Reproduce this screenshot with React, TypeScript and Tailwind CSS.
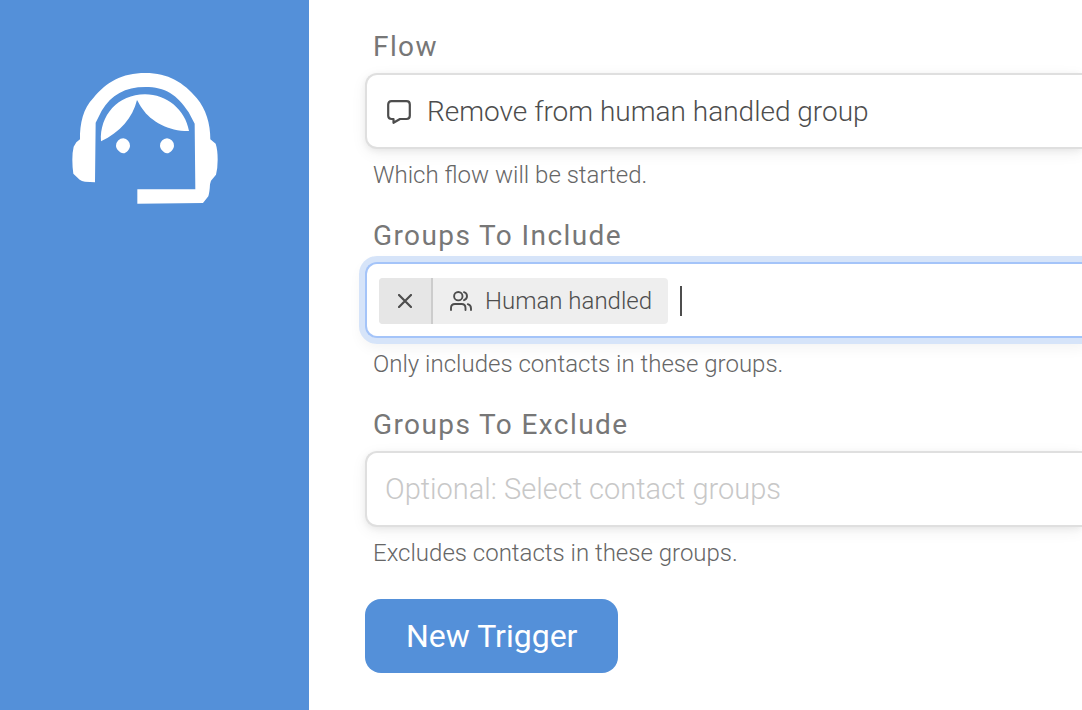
import React, { useState } from 'react';

interface FieldProps {
  id: string;
  label: string;
  hint: string;
  focused?: boolean;
  children: React.ReactNode;
}

// Headset logo shown at the top of the sidebar
const AgentIcon: React.FC = () => (
  <svg viewBox="36 38 438 393" className="w-[146px] h-[131px]" fill="white" aria-hidden="true">
    <path d="M105 366 L75 364 Q65 363 59 358 L40 340 Q37 320 37 298 Q37 275 41 259 L49 246 L60 237 C59 190 70 143 100 113 C140 65 185 38 256 38 C325 38 371 67 410 113 C438 146 451 190 451 237 L467 250 Q473 268 473 298 Q473 324 468 343 L453 361 L450 372 Q449 395 445 408 L429 428 L232 430 V387 H406 L404 190 L386 156 C352 103 315 80 256 80 C195 80 154 104 125 151 L107 187 Z" />
    <path d="M231 119 C236 127 240 136 247 145 C273 184 329 213 387 212 C376 148 320 102 255 102 C174 102 118 166 123 243 C180 216 218 173 231 119 Z" />
    <path d="M190 234 A22 22 0 0 1 210 256 C210 266 200 278 190 279 C179 277 168 266 168 256 A22 22 0 0 1 190 234 Z" />
    <path d="M321 234 A22 22 0 0 1 342 256 C342 266 331 278 321 279 C311 277 300 266 300 256 A22 22 0 0 1 321 234 Z" />
  </svg>
);

const MessageIcon: React.FC = () => (
  <svg viewBox="0 0 24 24" className="w-6 h-6 shrink-0" fill="none" stroke="currentColor" strokeWidth="2.2" strokeLinejoin="round" aria-hidden="true">
    <path d="M4.5 1.2 H19.5 Q22.8 1.2 22.8 4.5 V15.8 Q22.8 19 19.5 19 H13 L6.5 22.8 V19 H4.5 Q1.2 19 1.2 15.8 V4.5 Q1.2 1.2 4.5 1.2 Z" />
  </svg>
);

const GroupIcon: React.FC = () => (
  <svg viewBox="0 0 22 20" className="w-[22px] h-5 shrink-0" fill="none" stroke="currentColor" strokeWidth="1.9" strokeLinecap="round" aria-hidden="true">
    <circle cx="8.3" cy="5.2" r="4.2" />
    <path d="M14 1.2 Q17 2 17 5.2 Q17 8 14 9.2" />
    <path d="M1 19 V17 Q1 13 5 13 H11.5 Q15.5 13 15.5 17 V19" />
    <path d="M17.8 13.2 Q21 14 21 17.5 V19" />
  </svg>
);

const CloseIcon: React.FC = () => (
  <svg viewBox="0 0 14 14" className="w-[14px] h-[14px]" fill="none" stroke="currentColor" strokeWidth="2.2" strokeLinecap="round" aria-hidden="true">
    <path d="M1 1 L13 13 M13 1 L1 13" />
  </svg>
);

const Field: React.FC<FieldProps> = ({ id, label, hint, focused, children }) => {
  const box = focused
    ? 'border-[#a4c4f9] shadow-[0_0_0_6px_#d6e4f9,0_6px_14px_4px_rgba(0,0,0,0.05)]'
    : 'border-[#dfdfdf] shadow-[0_2px_6px_rgba(0,0,0,0.06),0_4px_16px_rgba(0,0,0,0.06)]';

  return (
    <div className="mb-[25px]">
      <label htmlFor={id} className="block mb-2 pl-2 text-[28px] leading-9 tracking-wider text-[#777]">
        {label}
      </label>
      <div className={`flex items-center h-19 rounded-l-xl border-2 border-r-0 bg-white ${box}`}>
        {children}
      </div>
      <p className="mt-2 pl-2 text-2xl leading-9 font-light text-[#666]">{hint}</p>
    </div>
  );
};

const App: React.FC = () => {
  const [groups, setGroups] = useState<string[]>(['Human handled']);

  const removeGroup = (name: string) => {
    setGroups((prev) => prev.filter((group) => group !== name));
  };

  return (
    <div className="flex min-h-screen overflow-hidden bg-white font-['Roboto',sans-serif] antialiased">
      <aside className="w-[309px] shrink-0 bg-[#5490d9] pt-[73px] pl-[72px]">
        <AgentIcon />
      </aside>

      <main className="flex-1 min-w-0 pt-[29px] pl-14">
        <form onSubmit={(e) => e.preventDefault()}>
          <Field id="flow" label="Flow" hint="Which flow will be started.">
            <div className="flex flex-1 items-center gap-4 pt-0.5 pl-5 text-[#4d4d4d]">
              <MessageIcon />
              <select id="flow" className="flex-1 min-w-0 appearance-none bg-transparent text-[28px] leading-9 font-light outline-none">
                <option>Remove from human handled group</option>
              </select>
            </div>
          </Field>

          <Field id="include" label="Groups To Include" hint="Only includes contacts in these groups." focused>
            <div className="flex flex-1 items-center gap-3 pt-0.5 pl-3 text-[#4d4d4d]">
              {groups.map((group) => (
                <div key={group} className="flex h-[46px] shrink-0 overflow-hidden rounded bg-[#eee]">
                  <button
                    type="button"
                    onClick={() => removeGroup(group)}
                    aria-label={`Remove ${group}`}
                    className="flex w-[54px] items-center justify-center border-r-2 border-[#ccc] bg-[#e6e6e6]"
                  >
                    <CloseIcon />
                  </button>
                  <div className="flex items-center gap-[13px] pr-4 pl-[17px] text-2xl font-light">
                    <GroupIcon />
                    <span>{group}</span>
                  </div>
                </div>
              ))}
              <div className="flex flex-1 min-w-0 items-center">
                <span className="h-[30px] w-[2px] bg-[#4d4d4d]" />
                <input id="include" type="text" className="flex-1 min-w-0 bg-transparent text-[28px] font-light caret-transparent outline-none" />
              </div>
            </div>
          </Field>

          <Field id="exclude" label="Groups To Exclude" hint="Excludes contacts in these groups.">
            <input
              id="exclude"
              type="text"
              placeholder="Optional: Select contact groups"
              className="flex-1 min-w-0 bg-transparent pl-[18px] text-[29px] leading-9 font-light text-[#4d4d4d] outline-none placeholder:text-[#c8c8c8]"
            />
          </Field>

          <button type="submit" className="mt-[3px] h-[74px] rounded-2xl bg-[#5490d9] px-[41px] text-[32px] text-white">
            New Trigger
          </button>
        </form>
      </main>
    </div>
  );
};

export default App;
